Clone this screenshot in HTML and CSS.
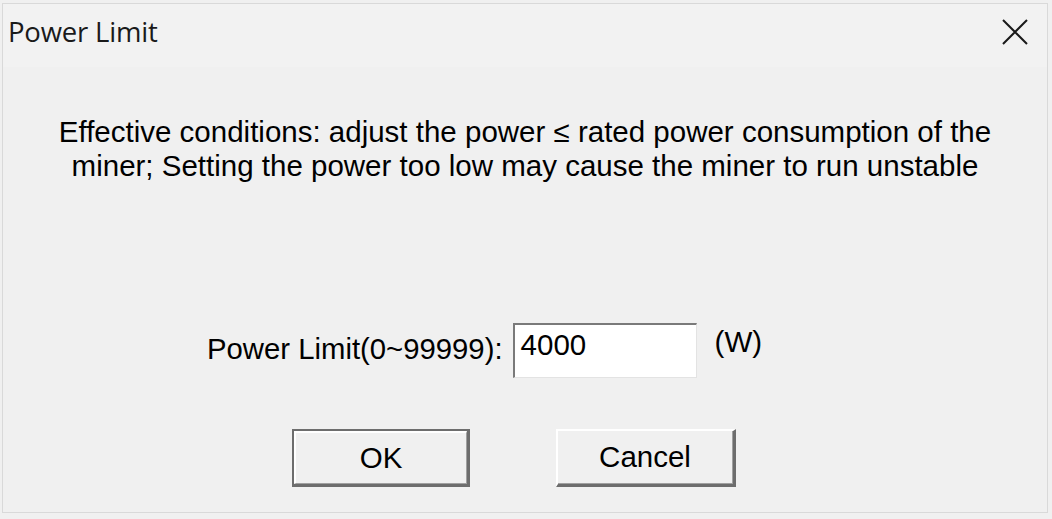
FILE: index.html
```html
<!DOCTYPE html>
<html>
<head>
<meta charset="utf-8">
<link rel="stylesheet" href="styles.css">
</head>
<body>
<div class="window">
  <div class="titlebar">
    <span class="title">Power Limit</span>
    <span class="close">
      <svg width="26" height="26" viewBox="0 0 26 26"><path d="M1 1 L25 25 M25 1 L1 25" stroke="#1a1a1a" stroke-width="2" fill="none"/></svg>
    </span>
  </div>
  <div class="content">
    <p class="message">Effective conditions: adjust the power ≤ rated power consumption of the<br>miner; Setting the power too low may cause the miner to run unstable</p>
    <div class="field-row">
      <label class="label">Power Limit(0~99999):</label>
      <div class="input">4000</div>
      <span class="unit">(W)</span>
    </div>
    <div class="buttons">
      <div class="btn default"><div class="btn-inner">OK</div></div>
      <div class="btn"><div class="btn-inner">Cancel</div></div>
    </div>
  </div>
</div>
</body>
</html>
```
FILE: styles.css
```css
html, body {
  margin: 0;
  padding: 0;
  background: #f0f0f0;
}
.window {
  margin: 3px 2px 0 2px;
  width: 1046px;
  height: 510px;
  border: 1px solid #d9d9d9;
  background: #f0f0f0;
  display: flex;
  flex-direction: column;
  box-sizing: border-box;
}
.titlebar {
  height: 63px;
  background: #f2f2f2;
  display: flex;
  align-items: center;
  justify-content: space-between;
  padding: 0 0 8px 5px;
  box-sizing: border-box;
}
.title {
  font-family: "Open Sans", "Noto Sans", sans-serif;
  font-size: 27.5px;
  color: #1a1a1a;
  letter-spacing: -0.2px;
}
.close {
  width: 26px;
  height: 26px;
  margin-right: 19px;
  display: flex;
}
.content {
  flex: 1;
  display: flex;
  flex-direction: column;
  align-items: center;
  font-family: "Liberation Sans", Arial, sans-serif;
  color: #000;
}
.message {
  margin: 48px 0 0 0;
  font-size: 29.5px;
  line-height: 34px;
  text-align: center;
}
.field-row {
  margin-top: 140px;
  display: flex;
  align-items: flex-start;
  align-self: flex-start;
  margin-left: 204px;
}
.label {
  font-size: 29.3px;
  margin-top: 9px;
  margin-right: 10px;
}
.input {
  width: 184px;
  height: 55px;
  box-sizing: border-box;
  background: #fff;
  border-top: 2px solid #7a7a7a;
  border-left: 2px solid #7a7a7a;
  border-right: 1px solid #e3e3e3;
  border-bottom: 1px solid #e3e3e3;
  font-size: 29.5px;
  padding: 3px 0 0 6px;
}
.unit {
  font-size: 29.5px;
  margin-left: 18px;
  margin-top: 2px;
}
.buttons {
  margin-top: 51px;
  display: flex;
  gap: 86px;
  align-self: flex-start;
  margin-left: 289px;
}
.btn {
  width: 180px;
  height: 58px;
  box-sizing: border-box;
  border-top: 2px solid #fff;
  border-left: 2px solid #fff;
  border-right: 3px solid #6d6d6d;
  border-bottom: 3px solid #6d6d6d;
  display: flex;
}
.btn.default {
  width: 178px;
  border: 2px solid #6d6d6d;
  border-right-width: 3px;
  border-bottom-width: 3px;
}
.btn-inner {
  flex: 1;
  display: flex;
  align-items: center;
  justify-content: center;
  font-size: 29.5px;
  background: #f0f0f0;
  border-right: 1px solid #a0a0a0;
  border-bottom: 1px solid #a0a0a0;
}
.btn.default .btn-inner {
  border-top: 2px solid #fff;
  border-left: 2px solid #fff;
}
```
